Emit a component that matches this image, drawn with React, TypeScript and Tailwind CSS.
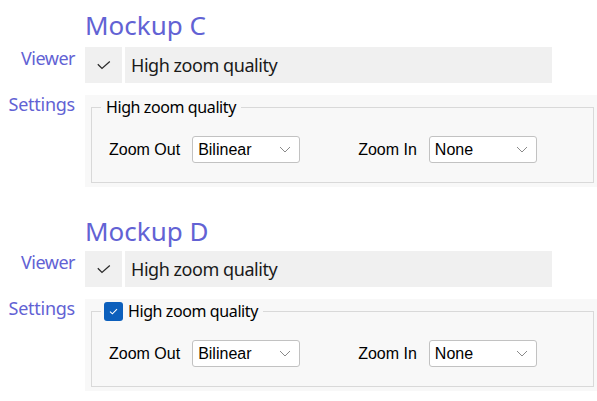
import { ReactNode } from 'react';

const accent = 'text-[#6262d4]';

const Chevron = () => (
  <svg width="12" height="7" viewBox="0 0 12 7" className="shrink-0">
    <path d="M1 1l5 5 5-5" fill="none" stroke="#8a8a8a" strokeWidth="1" />
  </svg>
);

const Select = ({ value }: { value: string }) => (
  <div className="flex h-[27px] w-[108px] items-center justify-between rounded-[3px] border border-[#c2c2c2] bg-white pl-[5px] pr-[8px] font-['Liberation_Sans',Arial,sans-serif] text-[16px] text-black">
    <span>{value}</span>
    <Chevron />
  </div>
);

const Label = ({ children, offset }: { children: ReactNode; offset: string }) => (
  <div className={`w-[85px] shrink-0 pr-[10px] text-right text-[18px] leading-[22px] ${accent} ${offset}`}>
    {children}
  </div>
);

const Mockup = ({ name, withCheckbox, top, gap }: { name: string; withCheckbox?: boolean; top: string; gap: string }) => (
  <section className={top}>
    <div className={`pl-[85px] text-[26px] leading-[30px] ${accent}`}>{name}</div>

    <div className={`${gap} flex`}>
      <Label offset="mt-0 tracking-[-0.5px]">Viewer</Label>
      <div className="flex h-[36px] w-[467px] gap-[3px]">
        <div className="flex w-[37px] items-center justify-center bg-[#f0f0f0]">
          <svg width="14" height="9" viewBox="0 0 14 9">
            <path d="M0.8 3.2l4.2 4.2 7.8-6.8" fill="none" stroke="#2b2b2b" strokeWidth="1.3" />
          </svg>
        </div>
        <div className="flex flex-1 items-center bg-[#f0f0f0] pl-[6px] text-[18px] tracking-[-0.45px] text-[#1a1a1a]">
          High zoom quality
        </div>
      </div>
    </div>

    <div className="mt-[12px] flex">
      <Label offset="-mt-[2px] tracking-[-0.25px]">Settings</Label>
      <div className="flex-1 bg-[#f8f8f8] pb-[4px] pl-[6px] pr-[3px]">
        <fieldset className="border border-[#d9d9d9] px-[9px] pb-[19px]">
          <legend className="px-[5px] text-[16px] leading-[24px] tracking-[-0.4px] text-black">
            {withCheckbox ? (
              <span className="flex items-center gap-[5px]">
                <span className="-ml-[2px] flex h-[19px] w-[19px] items-center justify-center rounded-[3px] bg-[#0c5fbc]">
                  <svg width="9" height="7" viewBox="0 0 9 7">
                    <path d="M1 3.6l2.4 2.2L8 1.2" fill="none" stroke="#ffffff" strokeWidth="1.1" />
                  </svg>
                </span>
                High zoom quality
              </span>
            ) : (
              'High zoom quality'
            )}
          </legend>
          <div className="mt-[17px] flex items-center pl-[8px] font-['Liberation_Sans',Arial,sans-serif] text-[16px] text-black">
            <span>Zoom Out</span>
            <div className="ml-[12px]">
              <Select value="Bilinear" />
            </div>
            <span className="ml-[58px]">Zoom In</span>
            <div className="ml-[12px]">
              <Select value="None" />
            </div>
          </div>
        </fieldset>
      </div>
    </div>
  </section>
);

export default function App() {
  return (
    <div className="h-[401px] w-[597px] overflow-hidden bg-white font-['Noto_Sans',sans-serif]">
      <Mockup name="Mockup C" top="pt-[10px]" gap="mt-[7px]" />
      <Mockup name="Mockup D" withCheckbox top="pt-[29px]" gap="mt-[5px]" />
    </div>
  );
}
